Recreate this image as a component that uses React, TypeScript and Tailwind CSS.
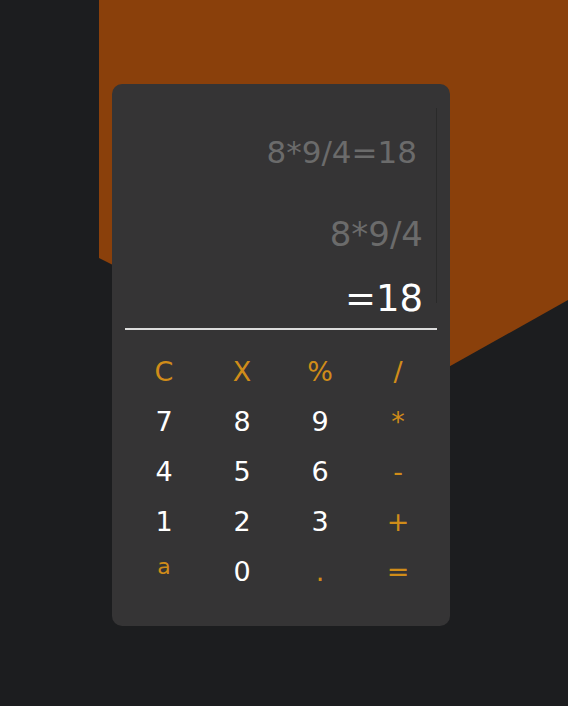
import React from "react";

const keys: { k: string; c: "o" | "w"; small?: boolean }[] = [
  { k: "C", c: "o" }, { k: "X", c: "o" }, { k: "%", c: "o" }, { k: "/", c: "o" },
  { k: "7", c: "w" }, { k: "8", c: "w" }, { k: "9", c: "w" }, { k: "*", c: "o" },
  { k: "4", c: "w" }, { k: "5", c: "w" }, { k: "6", c: "w" }, { k: "-", c: "o" },
  { k: "1", c: "w" }, { k: "2", c: "w" }, { k: "3", c: "w" }, { k: "+", c: "o" },
  { k: "a", c: "o", small: true }, { k: "0", c: "w" }, { k: ".", c: "o" }, { k: "=", c: "o" },
];

export default function App() {
  return (
    <div className="relative w-[568px] h-[706px] bg-[#1c1d1f] overflow-hidden" style={{ fontFamily: '"DejaVu Sans", Verdana, sans-serif' }}>
      <div className="absolute inset-0 bg-[#8a400b] [clip-path:polygon(99px_0,568px_0,568px_300px,386px_402px,99px_258px)]" />
      <div className="relative pt-[84px] pl-[112px]">
        <div className="w-[338px] h-[542px] bg-[#353435] rounded-[10px] px-[13px] flex flex-col">
          <div className="h-[244px] pt-[24px]">
            <div className="h-[195px] border-r border-[#2a2a2a] flex flex-col items-end">
              <div className="mt-[24px] pr-[19px] text-[31px] leading-[40px] text-[#6b6b6b] whitespace-nowrap">8*9/4=18</div>
              <div className="mt-[42px] pr-[13px] text-[34px] leading-[40px] text-[#6b6b6b] whitespace-nowrap">8*9/4</div>
              <div className="mt-[22px] pr-[13px] text-[37px] leading-[46px] text-white whitespace-nowrap">=18</div>
            </div>
          </div>
          <div className="h-[2px] bg-[#dcdcdc]" />
          <div className="grid grid-cols-4 mt-[17px]">
            {keys.map((b, i) => (
              <div
                key={i}
                className={`h-[50px] flex items-center justify-center ${b.c === "o" ? "text-[#d08c19]" : "text-white"} ${b.small ? "text-[22px] pb-[12px]" : "text-[27px]"}`}
              >
                {b.k}
              </div>
            ))}
          </div>
        </div>
      </div>
    </div>
  );
}
